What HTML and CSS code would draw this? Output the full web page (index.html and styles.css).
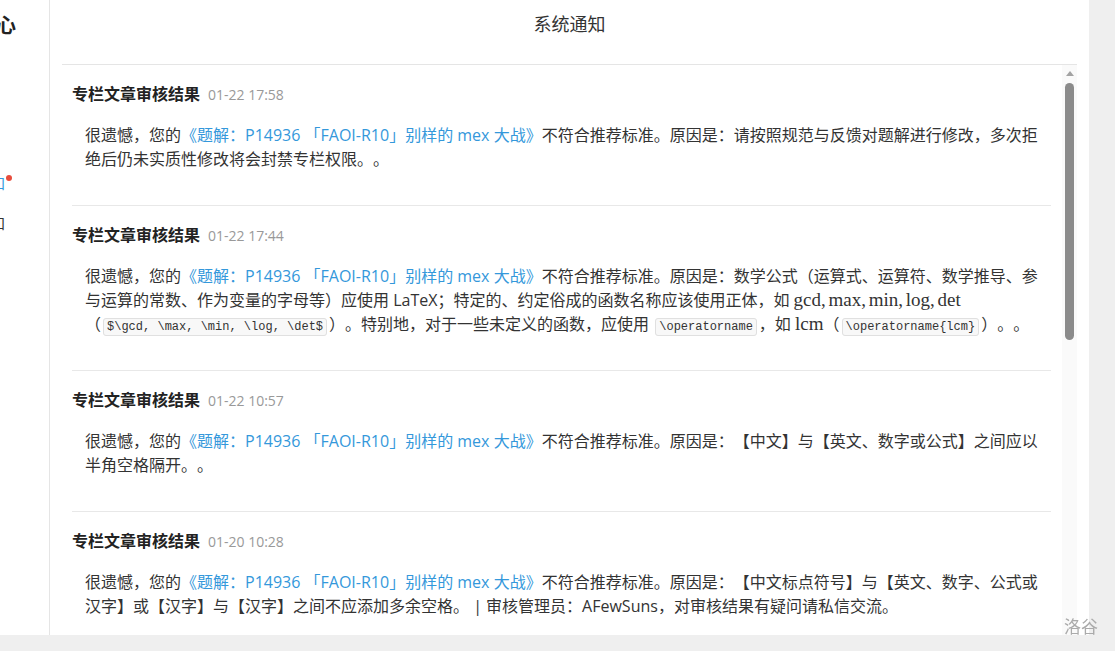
FILE: index.html
```html
<!DOCTYPE html>
<html lang="zh-CN">
<head>
  <meta charset="UTF-8">
  <meta name="viewport" content="width=device-width, initial-scale=1.0">
  <title>系统通知</title>
  <link rel="stylesheet" href="styles.css">
</head>
<body>
  <div class="page">
    <!-- Left nav (mostly scrolled out of view) -->
    <div class="sidebar">
      <div class="sidebar-inner">
        <div class="side-title">个人中心</div>
        <div class="side-nav">
          <div class="side-item active">系统通知<span class="dot"></span></div>
          <div class="side-item">活动通知</div>
        </div>
      </div>
    </div>

    <div class="main">
      <div class="header">系统通知</div>

      <div class="list-wrap">
        <div class="list">
          <div class="notice">
            <div class="notice-title">专栏文章审核结果<span class="notice-date">01-22 17:58</span></div>
            <div class="notice-body">很遗憾，您的<a class="link">《题解：P14936 「FAOI-R10」别样的 mex 大战》</a>不符合推荐标准。原因是：请按照规范与反馈对题解进行修改，多次拒绝后仍未实质性修改将会封禁专栏权限。。</div>
          </div>

          <div class="notice">
            <div class="notice-title">专栏文章审核结果<span class="notice-date">01-22 17:44</span></div>
            <div class="notice-body">很遗憾，您的<a class="link">《题解：P14936 「FAOI-R10」别样的 mex 大战》</a>不符合推荐标准。原因是：数学公式（运算式、运算符、数学推导、参与运算的常数、作为变量的字母等）应使用 LaTeX；特定的、约定俗成的函数名称应该使用正体，如 <span class="math">gcd, max, min, log, det</span>（<code class="code">$\gcd, \max, \min, \log, \det$</code>）。特别地，对于一些未定义的函数，应使用 <code class="code">\operatorname</code>，如 <span class="math">lcm</span>（<code class="code">\operatorname{lcm}</code>）。。</div>
          </div>

          <div class="notice">
            <div class="notice-title">专栏文章审核结果<span class="notice-date">01-22 10:57</span></div>
            <div class="notice-body">很遗憾，您的<a class="link">《题解：P14936 「FAOI-R10」别样的 mex 大战》</a>不符合推荐标准。原因是：【中文】与【英文、数字或公式】之间应以半角空格隔开。。</div>
          </div>

          <div class="notice">
            <div class="notice-title">专栏文章审核结果<span class="notice-date">01-20 10:28</span></div>
            <div class="notice-body">很遗憾，您的<a class="link">《题解：P14936 「FAOI-R10」别样的 mex 大战》</a>不符合推荐标准。原因是：【中文标点符号】与【英文、数字、公式或汉字】或【汉字】与【汉字】之间不应添加多余空格。 | 审核管理员：AFewSuns，对审核结果有疑问请私信交流。</div>
          </div>
        </div>

        <!-- scrollbar -->
        <div class="scrollbar">
          <div class="scroll-arrow"></div>
          <div class="scroll-thumb"></div>
        </div>
      </div>
    </div>
  </div>

  <div class="watermark">洛谷</div>
</body>
</html>
```

FILE: styles.css
```css
body {
  margin: 0;
  background-color: #efefef;
  font-family: "Open Sans", "Noto Sans CJK SC", sans-serif;
  color: #333;
  text-spacing-trim: space-all;
}

.page {
  display: flex;
  width: 1089px;
  height: 635px;
  background-color: #fff;
  overflow: hidden;
}

/* sidebar */
.sidebar {
  width: 49px;
  flex-shrink: 0;
  border-right: 1px solid #e5e5e5;
  overflow: hidden;
}

.sidebar-inner {
  width: 100px;
  margin-left: -84px;
  padding-top: 12px;
  text-align: right;
}

.side-title {
  font-size: 20px;
  font-weight: bold;
  line-height: 28px;
  color: #222;
}

.side-nav {
  margin-top: 123px;
}

.side-item {
  position: relative;
  font-size: 15px;
  line-height: 40px;
  padding-right: 11px;
  color: #333;
}

.side-item.active {
  color: #3498db;
}

.dot {
  position: absolute;
  right: 4px;
  top: 12px;
  width: 6px;
  height: 6px;
  border-radius: 50%;
  background-color: #e74c3c;
}

/* main */
.main {
  flex: 1;
  display: flex;
  flex-direction: column;
  padding: 0 12px;
  min-width: 0;
}

.header {
  box-sizing: border-box;
  height: 65px;
  padding-top: 12px;
  border-bottom: 1px solid #e5e5e5;
  text-align: center;
  font-size: 18px;
  line-height: 24px;
  color: #333;
}

.list-wrap {
  flex: 1;
  display: flex;
  min-height: 0;
}

.list {
  flex: 1;
  overflow: hidden;
  padding: 0 11px 0 10px;
}

.notice {
  padding: 17px 0 34px;
  border-bottom: 1px solid #e8e8e8;
}

.notice-title {
  font-size: 16px;
  font-weight: bold;
  line-height: 24px;
  color: #222;
}

.notice-date {
  margin-left: 8px;
  font-size: 14px;
  font-weight: normal;
  color: #999;
}

.notice-body {
  margin-top: 16px;
  padding: 0 13px;
  font-size: 16px;
  line-height: 24px;
  color: #333;
}

.link {
  color: #3498db;
  text-decoration: none;
}

.math {
  font-family: "Liberation Serif", serif;
  font-size: 19px;
  line-height: 1;
  word-spacing: -2px;
}

.code {
  font-family: "Liberation Mono", monospace;
  font-size: 12px;
  line-height: 1;
  white-space: nowrap;
  padding: 1px 3px;
  margin: 0 2px;
  border: 1px solid #e0e0e0;
  border-radius: 3px;
  background-color: #f8f8f8;
  color: #333;
}

/* scrollbar */
.scrollbar {
  width: 15px;
  flex-shrink: 0;
  display: flex;
  flex-direction: column;
  align-items: center;
  background-color: #fafafa;
}

.scroll-arrow {
  margin-top: 6px;
  width: 0;
  height: 0;
  border-left: 4px solid transparent;
  border-right: 4px solid transparent;
  border-bottom: 5px solid #a3a3a3;
}

.scroll-thumb {
  margin-top: 7px;
  width: 9px;
  height: 257px;
  border-radius: 5px;
  background-color: #8b8b8b;
}

.watermark {
  position: fixed;
  right: 17px;
  bottom: 13px;
  font-size: 17px;
  line-height: 22px;
  color: #aaa;
}
```
